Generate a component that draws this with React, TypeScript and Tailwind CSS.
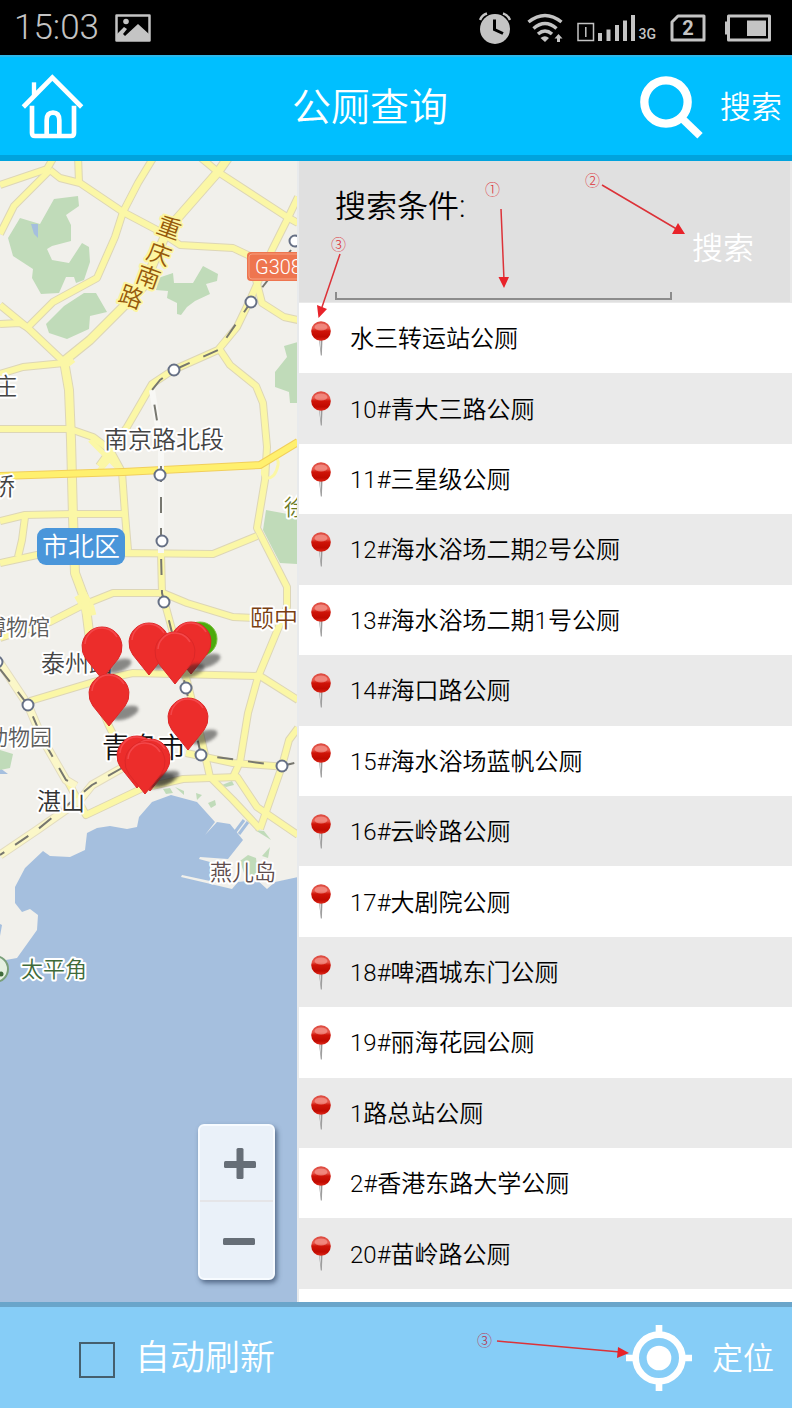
import { useState } from "react";

interface MapLabel {
  text: string;
  x: number;
  y: number;
  size: number;
  color: string;
}

interface MapPin {
  x: number;
  y: number;
}

const toilets = [
  "水三转运站公厕",
  "10#青大三路公厕",
  "11#三星级公厕",
  "12#海水浴场二期2号公厕",
  "13#海水浴场二期1号公厕",
  "14#海口路公厕",
  "15#海水浴场蓝帆公厕",
  "16#云岭路公厕",
  "17#大剧院公厕",
  "18#啤酒城东门公厕",
  "19#丽海花园公厕",
  "1路总站公厕",
  "2#香港东路大学公厕",
  "20#苗岭路公厕",
];

const roads = [
  "M0 185 L47 169 L55 155",
  "M50 170 L14 206 L0 234",
  "M50 170 L60 178 L80 183 L123 212 L157 230 L180 245 L233 248 L250 256 L262 303 L284 317 L298 320",
  "M78 155 L79 183",
  "M155 155 L138 183 L123 212 L115 237 L97 278 L53 302 L27 328",
  "M200 157 L218 172 L287 217 L298 223",
  "M298 197 L287 220 L272 250 L250 300 L237 327 L218 350 L173 370 L152 384 L127 427 L99 466",
  "M0 305 L28 328 L64 362",
  "M0 324 L20 323 L30 329",
  "M0 374 L23 367 L64 363",
  "M0 429 L70 429 L93 437 L110 450 L122 472 L125 514 L128 550",
  "M220 350 L230 365 L256 386 L263 403 L267 447 L265 480 L257 528 L287 587 L287 607 L258 677 L248 713 L240 762 L233 777",
  "M0 521 L25 515 L72 514 L125 514",
  "M25 517 L22 540 L18 557",
  "M0 563 L37 555 L125 553 L213 554 L257 536",
  "M0 638 L50 622 L83 605 L113 593 L163 593 L187 603 L233 617 L255 618",
  "M161 553 L162 593 L173 633 L185 673 L200 733 L210 777 L233 800 L260 829",
  "M30 701 L100 680 L133 673 L260 676 L298 700",
  "M98 700 L109 726 L122 752",
  "M186 753 L233 763 L287 767",
  "M68 782 L86 815 L143 788 L183 779 L237 777 L257 807 L298 835",
  "M298 728 L289 740 L282 766 L260 829",
];

const mainRoads = [
  "M230 155 L218 172 L168 229 L143 287 L90 340 L64 361 L69 390 L71 440 L73 517 L75 573 L85 600 L90 640",
];

const railRoads = [
  "M0 663 L28 705 L43 740 L66 780 L76 786",
  "M0 855 L37 830 L80 800 L92 785 L122 768",
];

const parks = [
  "M78 196 L79 206 L66 215 L71 225 L71 241 L52 246 L47 249 L52 260 L69 263 L82 243 L89 247 L90 262 L84 280 L76 283 L74 277 L66 277 L59 293 L41 294 L32 278 L33 269 L13 256 L8 238 L20 218 L40 224 L54 199 Z",
  "M84 293 L96 293 L107 312 L90 316 L89 329 L67 339 L49 333 L46 324 L64 306 Z",
  "M158 278 L173 273 L174 283 L193 283 L203 266 L218 274 L217 281 L206 284 L210 294 L195 301 L187 307 L181 315 L177 314 L177 303 L167 298 L168 291 L156 290 Z",
  "M298 342 L284 346 L287 357 L275 372 L275 387 L289 392 L290 403 L298 403 Z",
  "M266 510 L298 516 L298 564 L280 563 L263 530 Z",
  "M0 750 L13 754 L10 768 L0 770 Z",
  "M255 830 L264 831 L271 840 Z",
  "M163 789 L170 788 L173 793 L166 794 Z",
  "M175 787 L184 791 L184 795 Z",
  "M196 793 L202 795 L197 800 Z",
  "M208 803 L215 800 L216 805 L211 808 Z",
  "M240 861 L248 855 L256 858 L258 875 L245 876 Z",
  "M262 856 L270 847 L268 858 Z",
  "M222 785 L232 781 L234 785 L226 787 Z",
];

const stations = [
  [295, 241],
  [251, 302],
  [174, 370],
  [160, 475],
  [162, 541],
  [164, 602],
  [186, 688],
  [201, 755],
  [282, 766],
  [28, 705],
  [-3, 662],
];

const labels: MapLabel[] = [
  { text: "庄", x: -7, y: 395, size: 24, color: "#444" },
  { text: "南京路北段", x: 104, y: 448, size: 24, color: "#444" },
  { text: "桥", x: -9, y: 495, size: 24, color: "#444" },
  { text: "徐", x: 284, y: 515, size: 22, color: "#6c7a24" },
  { text: "颐中", x: 250, y: 627, size: 24, color: "#7a3f12" },
  { text: "博物馆", x: -16, y: 635, size: 22, color: "#5c5c5c" },
  { text: "泰州路", x: 41, y: 672, size: 24, color: "#444" },
  { text: "动物园", x: -14, y: 745, size: 22, color: "#5c5c5c" },
  { text: "青岛市", x: 102, y: 758, size: 28, color: "#111" },
  { text: "湛山", x: 37, y: 810, size: 24, color: "#333" },
  { text: "燕儿岛", x: 210, y: 880, size: 22, color: "#5e4c4c" },
  { text: "太平角", x: 21, y: 977, size: 22, color: "#3f6b3a" },
];

const pins: MapPin[] = [
  { x: 102, y: 679 },
  { x: 149, y: 675 },
  { x: 191, y: 674 },
  { x: 175, y: 684 },
  { x: 109, y: 726 },
  { x: 188, y: 750 },
  { x: 137, y: 788 },
  { x: 150, y: 791 },
  { x: 145, y: 794 },
];

function StatusBar() {
  return (
    <div className="flex h-[55px] items-center bg-black pr-5 pl-3.5 text-[#c4c4c4]">
      <span className="pt-0.5 text-[35px] font-light">15:03</span>
      <svg className="ml-4 h-7 w-9" viewBox="0 0 36 28" fill="none">
        <path d="M1.5 1.5h33v25h-33z" stroke="currentColor" strokeWidth="2.5" strokeLinejoin="round" />
        <circle cx="11" cy="7.5" r="2.8" fill="currentColor" />
        <path d="M2 20 L9 13 L12 15 L8 20 L10 22 L23 10 L34 20 V27 H2 Z" fill="currentColor" />
      </svg>

      <div className="ml-auto flex items-center gap-3.5">
        <svg className="mr-0.5 size-8" viewBox="0 0 32 32" fill="none">
          <circle cx="16" cy="17" r="15" fill="currentColor" />
          <path d="M1 8 Q3 3 8 1.500 M31 8 Q29 3 24 1.500" stroke="currentColor" strokeWidth="2.500" />
          <path d="M15.500 7.500 V17.500 L24 21.500" stroke="#000" strokeWidth="3" />
        </svg>
        <svg className="h-8 w-9" viewBox="0 0 36 32" fill="none">
          <path d="M1.500 10 Q18 -3 34.500 10" stroke="currentColor" strokeWidth="3.500" />
          <path d="M6.500 16.500 Q18 6.500 29.500 16.500" stroke="currentColor" strokeWidth="3.500" />
          <path d="M11 22 Q18 16 25 22" stroke="currentColor" strokeWidth="3.500" />
          <path d="M13.500 26 Q18 22.500 22 26 L18 30 Z" fill="currentColor" />
          <path d="M31.500 22 L35.500 26.500 H33 V30 H30 V26.500 H27.500 Z" fill="currentColor" />
        </svg>
        <div className="flex items-end">
          <svg className="h-7 w-[60px]" viewBox="0 0 60 28" fill="none">
            <path d="M1 9.500h15.500v17H1z" stroke="currentColor" strokeWidth="1.500" />
            <path d="M8.800 13v10" stroke="currentColor" strokeWidth="1.500" />
            <path
              d="M21 19h4v8h-4z M29.500 15.500h4V27h-4z M38 11h4v16h-4z M46 6.500h4V27h-4z M54 1h4v26h-4z"
              fill="currentColor"
            />
          </svg>
          <span className="ml-0.5 text-sm leading-4 font-medium">3G</span>
        </div>
        <span className="relative flex h-7 w-9 items-center justify-center">
          <svg className="absolute inset-0" viewBox="0 0 36 28" fill="none">
            <path d="M8 2 H34 V26 H2 V8 Z" stroke="currentColor" strokeWidth="3" strokeLinejoin="round" />
          </svg>
          <span className="text-xl leading-7 font-bold">2</span>
        </span>
        <svg className="ml-1 h-7 w-12" viewBox="0 0 48 28" fill="none">
          <path d="M4.500 2h41v24h-41z" stroke="currentColor" strokeWidth="3" strokeLinejoin="round" />
          <path d="M1 7.500h4v13H1z M23 6.500h19v15.500H23z" fill="currentColor" />
        </svg>
      </div>
    </div>
  );
}

function Header() {
  return (
    <header className="flex h-[106px] items-center border-t-2 border-b-6 border-t-[#2cb7ea] border-b-[#00a3dd] bg-[#00bfff] text-white">
      <button type="button" aria-label="首页" className="pr-4 pl-5">
        <svg className="h-[66px] w-16" viewBox="60 220 192 198" fill="none" stroke="currentColor" strokeWidth="14">
          <path d="M70 322 L157 234 L245 322" />
          <path d="M102 248 V290" strokeWidth="13" />
          <path d="M96 318 V400 Q96 409 105 409 H213 Q222 409 222 400 V318" />
          <path d="M140 409 V362 Q140 339 159 339 Q178 339 178 362 V409" />
        </svg>
      </button>
      <h1 className="flex-1 pt-1 text-center text-[39px] font-[350]">公厕查询</h1>
      <button type="button" className="flex items-center gap-4 pt-1 pr-2.5 text-[31px] font-[350]">
        <svg className="size-16" viewBox="735 229 192 192" fill="none" stroke="currentColor">
          <circle cx="813" cy="307" r="65" strokeWidth="25" />
          <path d="M862 357 L915 408" strokeWidth="23" />
        </svg>
        搜索
      </button>
    </header>
  );
}

function Pin({ x, y }: MapPin) {
  return (
    <g transform={`translate(${x} ${y})`}>
      <ellipse cx="16" cy="-13" rx="14" ry="6" transform="rotate(-20 16 -13)" fill="#222" opacity="0.5" filter="url(#soft)" />
      <path d="M0 0 L-16 -20 A20 20 0 1 1 16 -20 Z" fill="#ec2d2b" stroke="#dc2828" />
      <path d="M-17 -35 A17 17 0 0 1 15 -42" fill="none" stroke="#f4474a" strokeWidth="1.500" />
    </g>
  );
}

function CityMap() {
  return (
    <section aria-label="地图" className="relative w-3/8 overflow-hidden bg-[#a5bfde]">
      <svg
        className="absolute inset-0 h-full w-full font-[350]"
        viewBox="0 161 297 1141"
        preserveAspectRatio="xMinYMin slice"
        fill="none"
        strokeLinejoin="round"
      >
        <defs>
          <filter id="soft" x="-30%" y="-50%" width="160%" height="200%">
            <feGaussianBlur stdDeviation="1.5" />
          </filter>
        </defs>

        {/* land and coast */}
        <path
          d="M0 155 H298 V877 L275 882 L267 889 L257 880 L238 882 L232 889 L181 877 L182 875 L210 881 L210 862 L199 859 L200 857 L228 859 L243 840 L230 824 L217 822 L205 835 L215 822 L197 802 L171 795 L152 802 L139 817 L137 827 L127 829 L110 826 L97 828 L87 833 L85 850 L70 857 L50 856 L43 851 L25 868 L15 887 L15 903 L22 912 L30 909 L38 915 L37 930 L17 958 L0 961 Z"
          fill="#f1f0eb"
        />
        <path d="M235 832 L244 820 M239 834 L248 822" stroke="#a5bfde" strokeWidth="3" />
        <path d="M0 768 L8 774 H0 Z M0 924 L2 925 L0 936 Z" fill="#a5bfde" />
        {parks.map((d) => (
          <path key={d} d={d} fill="#c0dbb9" />
        ))}
        <path d="M31 224 L38 224 L38 238 L34 234 Z" fill="#a5bfde" />

        {/* road casing first, then fill */}
        {roads.map((d) => (
          <path key={d} d={d} stroke="#ddd6b6" strokeWidth="8" />
        ))}
        {mainRoads.map((d) => (
          <path key={d} d={d} stroke="#ddd6b6" strokeWidth="10" />
        ))}
        {railRoads.map((d) => (
          <path key={d} d={d} stroke="#e3dcc0" strokeWidth="9" />
        ))}
        <path d="M64 358 L70 366 M80 594 L88 608 L90 616" stroke="#fbf7a6" strokeWidth="13" />
        {roads.map((d) => (
          <path key={d} d={d} stroke="#fbf7a6" strokeWidth="6" />
        ))}
        {mainRoads.map((d) => (
          <path key={d} d={d} stroke="#fbf7a6" strokeWidth="8" />
        ))}
        {railRoads.map((d) => (
          <path key={d} d={d} stroke="#fbf7c8" strokeWidth="7" />
        ))}
        <path d="M90 440 L122 472 M113 455 L98 472" stroke="#fbf7a6" strokeWidth="5" />
        <path d="M257 466 Q280 450 278 465 Q275 480 265 478 Q258 472 270 458" stroke="#fbf7a6" strokeWidth="3" />
        <path d="M0 476 L123 472 L260 465 L298 442" stroke="#f1cf5c" strokeWidth="8" />
        <path d="M0 476 L123 472 L260 465 L298 442" stroke="#fff06e" strokeWidth="6" />

        {/* railway */}
        <path d="M152 390 L161 445 V553" stroke="#f8f8f5" strokeWidth="6" />
        <path
          d="M291 250 L251 302 L218 350 L174 370 L160 380 L152 390 L161 445 V553 L162 593 L186 688 L201 755 L282 766 L298 762"
          stroke="#77776f"
          strokeWidth="2"
          strokeDasharray="16 15"
        />
        <path
          d="M0 669 L28 705 L43 740 L66 780 L76 784 M122 768 L92 785 L37 830 L0 855"
          stroke="#77776f"
          strokeWidth="2"
          strokeDasharray="16 13"
        />
        {stations.map(([cx, cy]) => (
          <circle key={`${cx}-${cy}`} cx={cx} cy={cy} r="5.500" fill="#fff" stroke="#667085" strokeWidth="2" />
        ))}

        {/* names */}
        {labels.map((label) => (
          <text
            key={label.text}
            x={label.x}
            y={label.y}
            fontSize={label.size}
            fill={label.color}
            stroke="#fff"
            strokeWidth="4"
            paintOrder="stroke"
          >
            {label.text}
          </text>
        ))}
        <text
          x="155 145 134 117"
          y="232 258 281 301"
          rotate="20"
          fontSize="24"
          fill="#965a0c"
          stroke="#fdf5a0"
          strokeWidth="4"
          paintOrder="stroke"
        >
          重庆南路
        </text>
        <rect x="37" y="528" width="88" height="37" rx="9" fill="#4a96da" />
        <text x="81" y="556" fontSize="26" textAnchor="middle" fill="#fff">
          市北区
        </text>
        <rect x="247" y="252" width="70" height="29" rx="4" fill="#ee754f" />
        <rect x="249" y="254" width="70" height="25" rx="3" stroke="#f7a080" />
        <text x="255" y="274" fontSize="20" fill="#fff">
          G308
        </text>
        <circle cx="-5" cy="969" r="13" fill="#e4f0e0" stroke="#7aa07a" strokeWidth="2" />
        <circle cx="1" cy="974" r="2.500" fill="#3f6b3a" />

        {/* current position sits behind the red pins */}
        <circle cx="200" cy="639" r="17" fill="#4caa0c" stroke="#7cc243" />
        {pins.map((pin) => (
          <Pin key={`${pin.x}-${pin.y}`} {...pin} />
        ))}
      </svg>

      <div className="absolute right-[22px] bottom-[22px] flex w-[77px] flex-col overflow-hidden rounded-md border-2 border-[#f7fbff] bg-[#eaf1f9] text-[#666e77] shadow-[2px_3px_5px_rgba(50,70,100,0.7)]">
        <button type="button" aria-label="放大" className="flex h-[76px] items-center justify-center border-b-2 border-[#e5e5e8]">
          <svg className="ml-1.5 size-8" viewBox="0 0 32 32" fill="currentColor">
            <rect y="14" width="32" height="7" rx="1.500" />
            <rect x="12.500" y="1" width="7" height="31" rx="1.500" />
          </svg>
        </button>
        <button type="button" aria-label="缩小" className="flex h-[76px] items-center justify-center">
          <svg className="mr-0.5 ml-1.5 size-8" viewBox="0 0 32 32" fill="currentColor">
            <rect y="14" width="32" height="7" rx="1.500" />
          </svg>
        </button>
      </div>
    </section>
  );
}

function SearchForm() {
  const [keyword, setKeyword] = useState("");

  return (
    <form
      className="relative flex h-[142px] items-center border-r-2 border-b border-[#e9e9e9] bg-[#e0e0e0] pr-9 pl-9"
      onSubmit={(e) => e.preventDefault()}
    >
      <div className="flex h-full min-w-0 flex-1 flex-col pb-0.5">
        <label htmlFor="keyword" className="pt-6 text-[31px] leading-11 font-[350] text-black">
          搜索条件:
        </label>
        <input
          id="keyword"
          value={keyword}
          onChange={(e) => setKeyword(e.target.value)}
          className="min-h-0 w-full flex-1 bg-transparent px-3 text-2xl outline-none"
        />
        <div className="pointer-events-none -mt-2 h-2 border-x-2 border-b-2 border-[#8c8c8c]" />
      </div>
      <button type="submit" className="mt-9 ml-5 text-[31px] font-[350] text-white">
        搜索
      </button>

      {/* step marks */}
      <svg
        className="pointer-events-none absolute top-0 left-0 h-40 w-[400px]"
        viewBox="299 161 400 160"
        fill="#e8232a"
        stroke="none"
      >
        <g stroke="#dc3238" strokeWidth="1.500">
          <path d="M501 209 L504 280 M602 185 L680 231 M340 254 L321 310" />
        </g>
        <path d="M498.500 277 L509 277 L504 288 Z M678 223 L685 234 L672 234 Z M317 305 L327 309 L318.500 318 Z" />
        <g fontSize="15" fill="#dc3238" className="font-light">
          <text x="485" y="195">①</text>
          <text x="585" y="186">②</text>
          <text x="331" y="250">③</text>
        </g>
      </svg>
    </form>
  );
}

function PushPin() {
  return (
    <svg className="h-[35px] w-5 shrink-0" viewBox="0 0 20 35">
      <defs>
        <linearGradient id="ball" x1="0" y1="0" x2="0" y2="1">
          <stop offset="0" stopColor="#dc4a40" />
          <stop offset="0.35" stopColor="#e8584c" />
          <stop offset="0.5" stopColor="#cf1408" />
          <stop offset="0.8" stopColor="#c00a00" />
          <stop offset="1" stopColor="#e02a1c" />
        </linearGradient>
      </defs>
      <path d="M8 18 L11.500 18 L10.800 34.500 L9.800 34.500 Z" fill="#999" />
      <path d="M8.500 19 L9.800 19 L10.200 31 Z" fill="#e5e5e5" />
      <circle cx="10" cy="10" r="9.800" fill="url(#ball)" />
      <ellipse cx="10" cy="6" rx="6.500" ry="3.500" fill="#fbb8b0" opacity="0.5" />
    </svg>
  );
}

function ToiletList() {
  return (
    <ul className="flex flex-1 flex-col bg-white pb-[13px]">
      {toilets.map((name) => (
        <li key={name} className="flex min-h-[70px] flex-1 even:bg-[#eaeaea]">
          <button type="button" className="flex w-full items-center gap-[19px] pl-3 text-left text-2xl font-[350] text-black">
            <PushPin />
            <span className="pt-0.5">{name}</span>
          </button>
        </li>
      ))}
    </ul>
  );
}

function Footer() {
  const [autoRefresh, setAutoRefresh] = useState(false);

  return (
    <footer className="relative flex h-[106px] items-center justify-between border-t-5 border-[#6aa5ca] bg-[#86cdf7] pr-[18px] pl-[79px] text-white">
      <label className="flex items-center gap-5 pt-1 text-[35px] font-[350]">
        <input
          type="checkbox"
          checked={autoRefresh}
          onChange={(e) => setAutoRefresh(e.target.checked)}
          className="size-9 appearance-none border-2 border-[#455f6e] checked:bg-[#455f6e]"
        />
        自动刷新
      </label>
      <button type="button" className="flex items-center gap-5 text-[31px] font-[350]">
        <svg className="size-[66px]" viewBox="-99 -99 198 198" fill="none" stroke="currentColor" strokeWidth="20">
          <circle r="70" />
          <circle r="37" fill="currentColor" stroke="none" />
          <path d="M0 -99 V-72 M0 72 V99 M-99 0 H-72 M72 0 H99" />
        </svg>
        <span className="pt-1">定位</span>
      </button>

      <svg className="pointer-events-none absolute top-4 right-40 h-10 w-40" viewBox="472 1323 160 40" fill="#e8232a">
        <path d="M497 1341 L620 1352" stroke="#dc3238" strokeWidth="1.500" />
        <path d="M618 1347 L629 1353 L617 1358 Z" />
        <text x="477" y="1346" fontSize="15" fill="#b8324c" className="font-light">
          ③
        </text>
      </svg>
    </footer>
  );
}

export default function App() {
  return (
    <div
      lang="zh-CN"
      className="flex min-h-screen flex-col bg-white font-[Roboto,'Noto_Sans_CJK_SC',sans-serif]"
    >
      <StatusBar />
      <Header />
      <main className="flex flex-1">
        <CityMap />
        <section className="flex min-w-0 flex-1 flex-col border-l-2 border-[#e8eaec]">
          <SearchForm />
          <ToiletList />
        </section>
      </main>
      <Footer />
    </div>
  );
}
